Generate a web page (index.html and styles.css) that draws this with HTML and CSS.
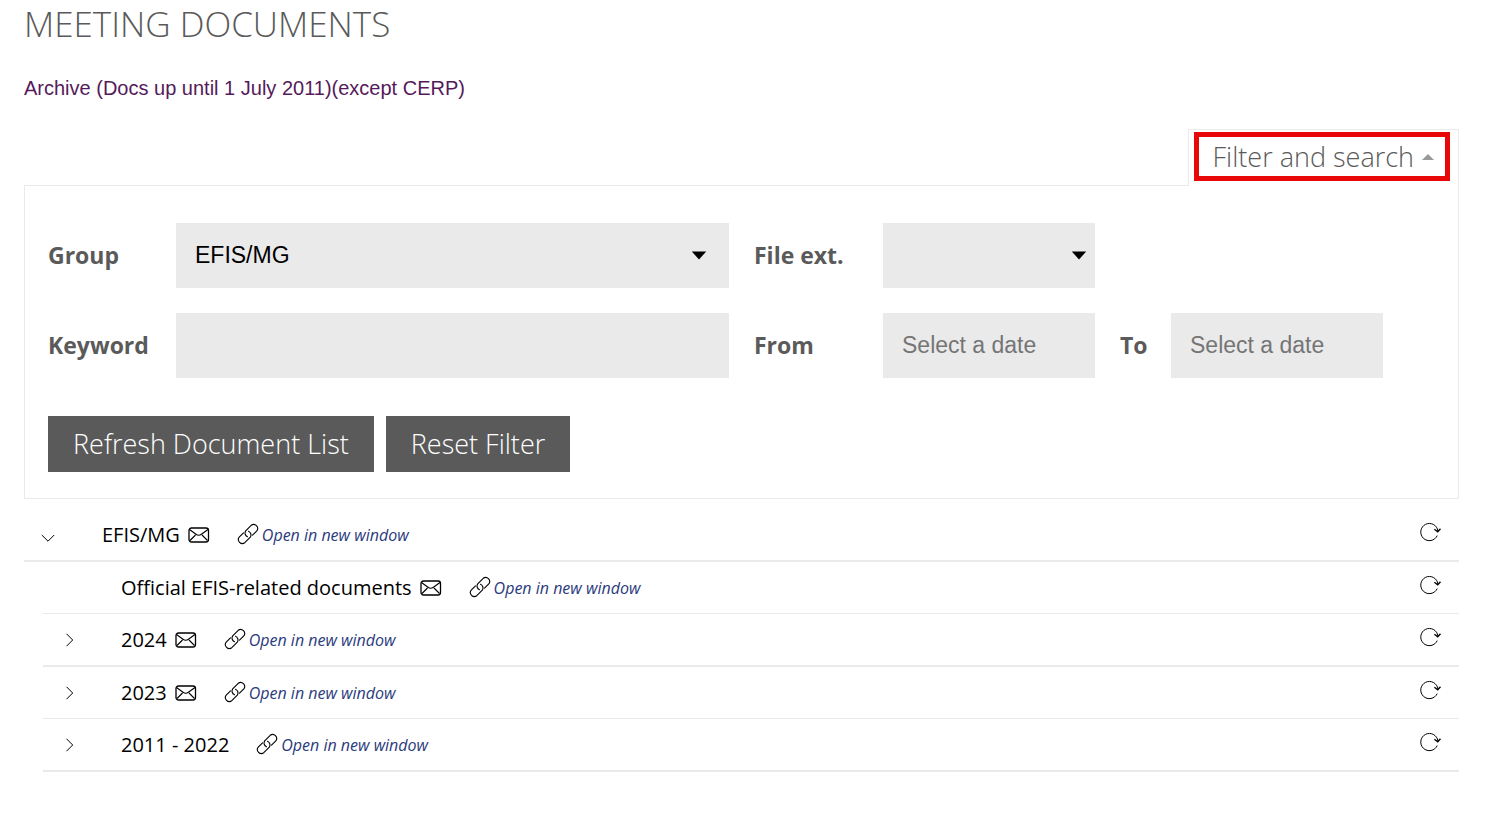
FILE: index.html
```
<!DOCTYPE html>
<html lang="en">
<head>
<meta charset="utf-8">
<title>Meeting Documents</title>
<link rel="stylesheet" href="styles.css">
</head>
<body>
<svg class="sprite" width="0" height="0" aria-hidden="true">
  <symbol id="mail" viewBox="0 0 22 16">
    <rect x="1" y="1" width="19.500" height="14" rx="2.500" fill="none" stroke="currentColor" stroke-width="1.300"/>
    <path d="M1.500 2.500 8 7.300q2.700 2 5.400 0L20 2.500M2 13.500 7.500 8M19.500 13.500 14 8" fill="none" stroke="currentColor" stroke-width="1.100"/>
  </symbol>
  <symbol id="link" viewBox="0 0 22 22">
    <g fill="none" stroke="currentColor" stroke-width="1.100" stroke-linecap="round">
      <path d="M10.500 13.800A4 4 0 0 1 8.700 7.900L14.200 2.300A4 4 0 0 1 19.800 7.900L15.500 12.200"/>
      <path d="M11.500 8.200A4 4 0 0 1 13.300 14.100L7.800 19.700A4 4 0 0 1 2.200 14.100L6.500 9.800"/>
    </g>
  </symbol>
  <symbol id="refresh" viewBox="0 0 22 20">
    <path d="M18.200 13.600A8.600 8.600 0 1 1 18.900 9" fill="none" stroke="currentColor" stroke-width="1"/>
    <path d="M15.400 7.300l3.300 2.400 2.800-3" fill="none" stroke="currentColor" stroke-width="1.400"/>
  </symbol>
  <symbol id="down" viewBox="0 0 14 14">
    <path d="M.8 4 7 10.200 13.200 4" fill="none" stroke="currentColor" stroke-width="1"/>
  </symbol>
  <symbol id="right" viewBox="0 0 14 14">
    <path d="M3.500 .8 9.700 7 3.500 13.200" fill="none" stroke="currentColor" stroke-width="1"/>
  </symbol>
  <symbol id="caret" viewBox="0 0 16 9">
    <path d="M.8 .5h14.400L8 8.500z" fill="currentColor"/>
  </symbol>
</svg>

<main class="page">
  <h1 class="title">MEETING DOCUMENTS</h1>
  <a class="archive" href="#">Archive (Docs up until 1 July 2011)(except CERP)</a>

  <section class="filter">
    <div class="filter-tab">
      <button class="filter-toggle" type="button" aria-expanded="true">Filter and search<svg class="toggle-arrow" viewBox="0 0 12 6"><path d="M0 6h12L6 0z" fill="currentColor"/></svg></button>
    </div>
    <form class="filter-panel">
      <div class="fields">
        <label for="group">Group</label>
        <div class="select">
          <select id="group"><option>EFIS/MG</option></select>
          <svg class="caret"><use href="#caret"/></svg>
        </div>
        <label class="second" for="ext">File ext.</label>
        <div class="select select-small">
          <select id="ext"><option></option></select>
          <svg class="caret"><use href="#caret"/></svg>
        </div>
        <label class="row-start" for="keyword">Keyword</label>
        <input id="keyword" type="text">
        <label class="second" for="from">From</label>
        <input id="from" type="text" placeholder="Select a date">
        <label class="second" for="to">To</label>
        <input id="to" type="text" placeholder="Select a date">
      </div>
      <div class="actions">
        <button class="btn" type="button">Refresh Document List</button>
        <button class="btn" type="button">Reset Filter</button>
      </div>
    </form>
  </section>

  <ul class="tree">
    <li>
      <div class="row strong">
        <button class="expander" type="button" aria-label="Collapse"><svg class="chevron"><use href="#down"/></svg></button>
        <span class="name">EFIS/MG</span>
        <svg class="mail"><use href="#mail"/></svg>
        <a class="open" href="#"><svg class="link"><use href="#link"/></svg>Open in new window</a>
        <button class="reload" type="button" aria-label="Refresh"><svg class="refresh"><use href="#refresh"/></svg></button>
      </div>
      <ul class="branch">
        <li class="row">
          <span class="expander"></span>
          <span class="name">Official EFIS-related documents</span>
          <svg class="mail"><use href="#mail"/></svg>
          <a class="open" href="#"><svg class="link"><use href="#link"/></svg>Open in new window</a>
          <button class="reload" type="button" aria-label="Refresh"><svg class="refresh"><use href="#refresh"/></svg></button>
        </li>
        <li class="row strong">
          <button class="expander" type="button" aria-label="Expand"><svg class="chevron"><use href="#right"/></svg></button>
          <span class="name">2024</span>
          <svg class="mail"><use href="#mail"/></svg>
          <a class="open" href="#"><svg class="link"><use href="#link"/></svg>Open in new window</a>
          <button class="reload" type="button" aria-label="Refresh"><svg class="refresh"><use href="#refresh"/></svg></button>
        </li>
        <li class="row">
          <button class="expander" type="button" aria-label="Expand"><svg class="chevron"><use href="#right"/></svg></button>
          <span class="name">2023</span>
          <svg class="mail"><use href="#mail"/></svg>
          <a class="open" href="#"><svg class="link"><use href="#link"/></svg>Open in new window</a>
          <button class="reload" type="button" aria-label="Refresh"><svg class="refresh"><use href="#refresh"/></svg></button>
        </li>
        <li class="row strong">
          <button class="expander" type="button" aria-label="Expand"><svg class="chevron"><use href="#right"/></svg></button>
          <span class="name">2011 - 2022</span>
          <a class="open" href="#"><svg class="link"><use href="#link"/></svg>Open in new window</a>
          <button class="reload" type="button" aria-label="Refresh"><svg class="refresh"><use href="#refresh"/></svg></button>
        </li>
      </ul>
    </li>
  </ul>
</main>
</body>
</html>
```

FILE: styles.css
```
* {
  box-sizing: border-box;
}

body {
  margin: 0;
  background: #fff;
  color: #000;
  font-family: "Open Sans", "Noto Sans", sans-serif;
}

button,
input,
select {
  margin: 0;
  padding: 0;
  border: 0;
  border-radius: 0;
  background: none;
  font: inherit;
  color: inherit;
}

svg {
  display: block;
  flex: none;
}

.sprite {
  position: absolute;
}

.page {
  padding: 0 49px 0 24px;
}

.title {
  margin: 0 0 26px;
  color: #5a5a5a;
  font-size: 35px;
  font-weight: 300;
  line-height: 48px;
}

.archive {
  display: block;
  margin-bottom: 27px;
  color: #551a5b;
  font-family: "Liberation Sans", Arial, sans-serif;
  font-size: 20px;
  line-height: 28px;
  text-decoration: none;
}

/* Filter box */

.filter {
  display: flex;
  flex-direction: column;
}

.filter-tab {
  z-index: 1;
  align-self: flex-end;
  margin-bottom: -1px;
  padding: 2px 8px 5px 5px;
  border: 1px solid #eaeaea;
  border-bottom: 0;
  background: #fff;
}

.filter-toggle {
  display: flex;
  align-items: center;
  gap: 8px;
  height: 49px;
  padding: 0 11px 0 14px;
  border: 5px solid #e90808;
  color: #5a5a5a;
  font-size: 27px;
  font-weight: 300;
  line-height: 38px;
}

.toggle-arrow {
  width: 12px;
  height: 6px;
  color: #999;
}

.filter-panel {
  padding: 37px 75px 26px 23px;
  border: 1px solid #eaeaea;
}

.fields {
  display: grid;
  grid-template-columns: 128px 1fr 154px 212px 76px 212px;
  row-gap: 25px;
  align-items: center;
  color: #5a5a5a;
  font-size: 23px;
  font-weight: 700;
}

.fields label {
  padding-bottom: 2px;
}

.row-start {
  grid-column: 1;
}

.second {
  padding-left: 25px;
}

.fields input,
.fields select {
  width: 100%;
  height: 65px;
  padding: 0 19px;
  background: #eaeaea;
  color: #000;
  font-family: "Liberation Sans", Arial, sans-serif;
  font-size: 23px;
  font-weight: 400;
}

.fields select {
  display: block;
  padding-bottom: 2px;
  appearance: none;
}

.fields input::placeholder {
  color: #757575;
}

.select {
  position: relative;
}

.caret {
  position: absolute;
  top: 28px;
  right: 22px;
  width: 16px;
  height: 9px;
  color: #000;
  pointer-events: none;
}

.select-small .caret {
  right: 8px;
}

.actions {
  display: flex;
  gap: 12px;
  margin-top: 38px;
}

.btn {
  height: 56px;
  padding: 0 25px 2px;
  background: #5a5a5a;
  color: #fff;
  font-size: 27px;
  font-weight: 300;
}

/* Document tree */

.tree,
.branch {
  margin: 0;
  padding: 0;
  list-style: none;
}

.tree {
  padding-top: 10px;
}

.branch {
  padding-left: 19px;
}

.row {
  display: flex;
  align-items: center;
  box-sizing: content-box;
  height: 51px;
  padding-right: 18px;
  border-bottom: 1px solid #eaeaea;
}

.strong {
  border-bottom-width: 2px;
}

.expander {
  width: 78px;
  padding-left: 17px;
}

.branch .expander {
  padding-left: 20px;
}

.tree > li > .row .expander {
  padding-top: 6px;
}

.chevron {
  width: 14px;
  height: 14px;
}

.name {
  font-size: 20px;
  line-height: 28px;
}

.mail {
  width: 22px;
  height: 16px;
  margin-left: 8px;
}

.open {
  display: flex;
  align-items: center;
  gap: 3px;
  margin-left: 27px;
  color: #2b3a7c;
  font-size: 16px;
  font-style: italic;
  line-height: 24px;
  text-decoration: none;
}

.link {
  width: 22px;
  height: 22px;
  margin-bottom: 2px;
  color: #000;
}

.reload {
  margin-left: auto;
  padding-bottom: 6px;
}

.refresh {
  width: 22px;
  height: 20px;
}
```
